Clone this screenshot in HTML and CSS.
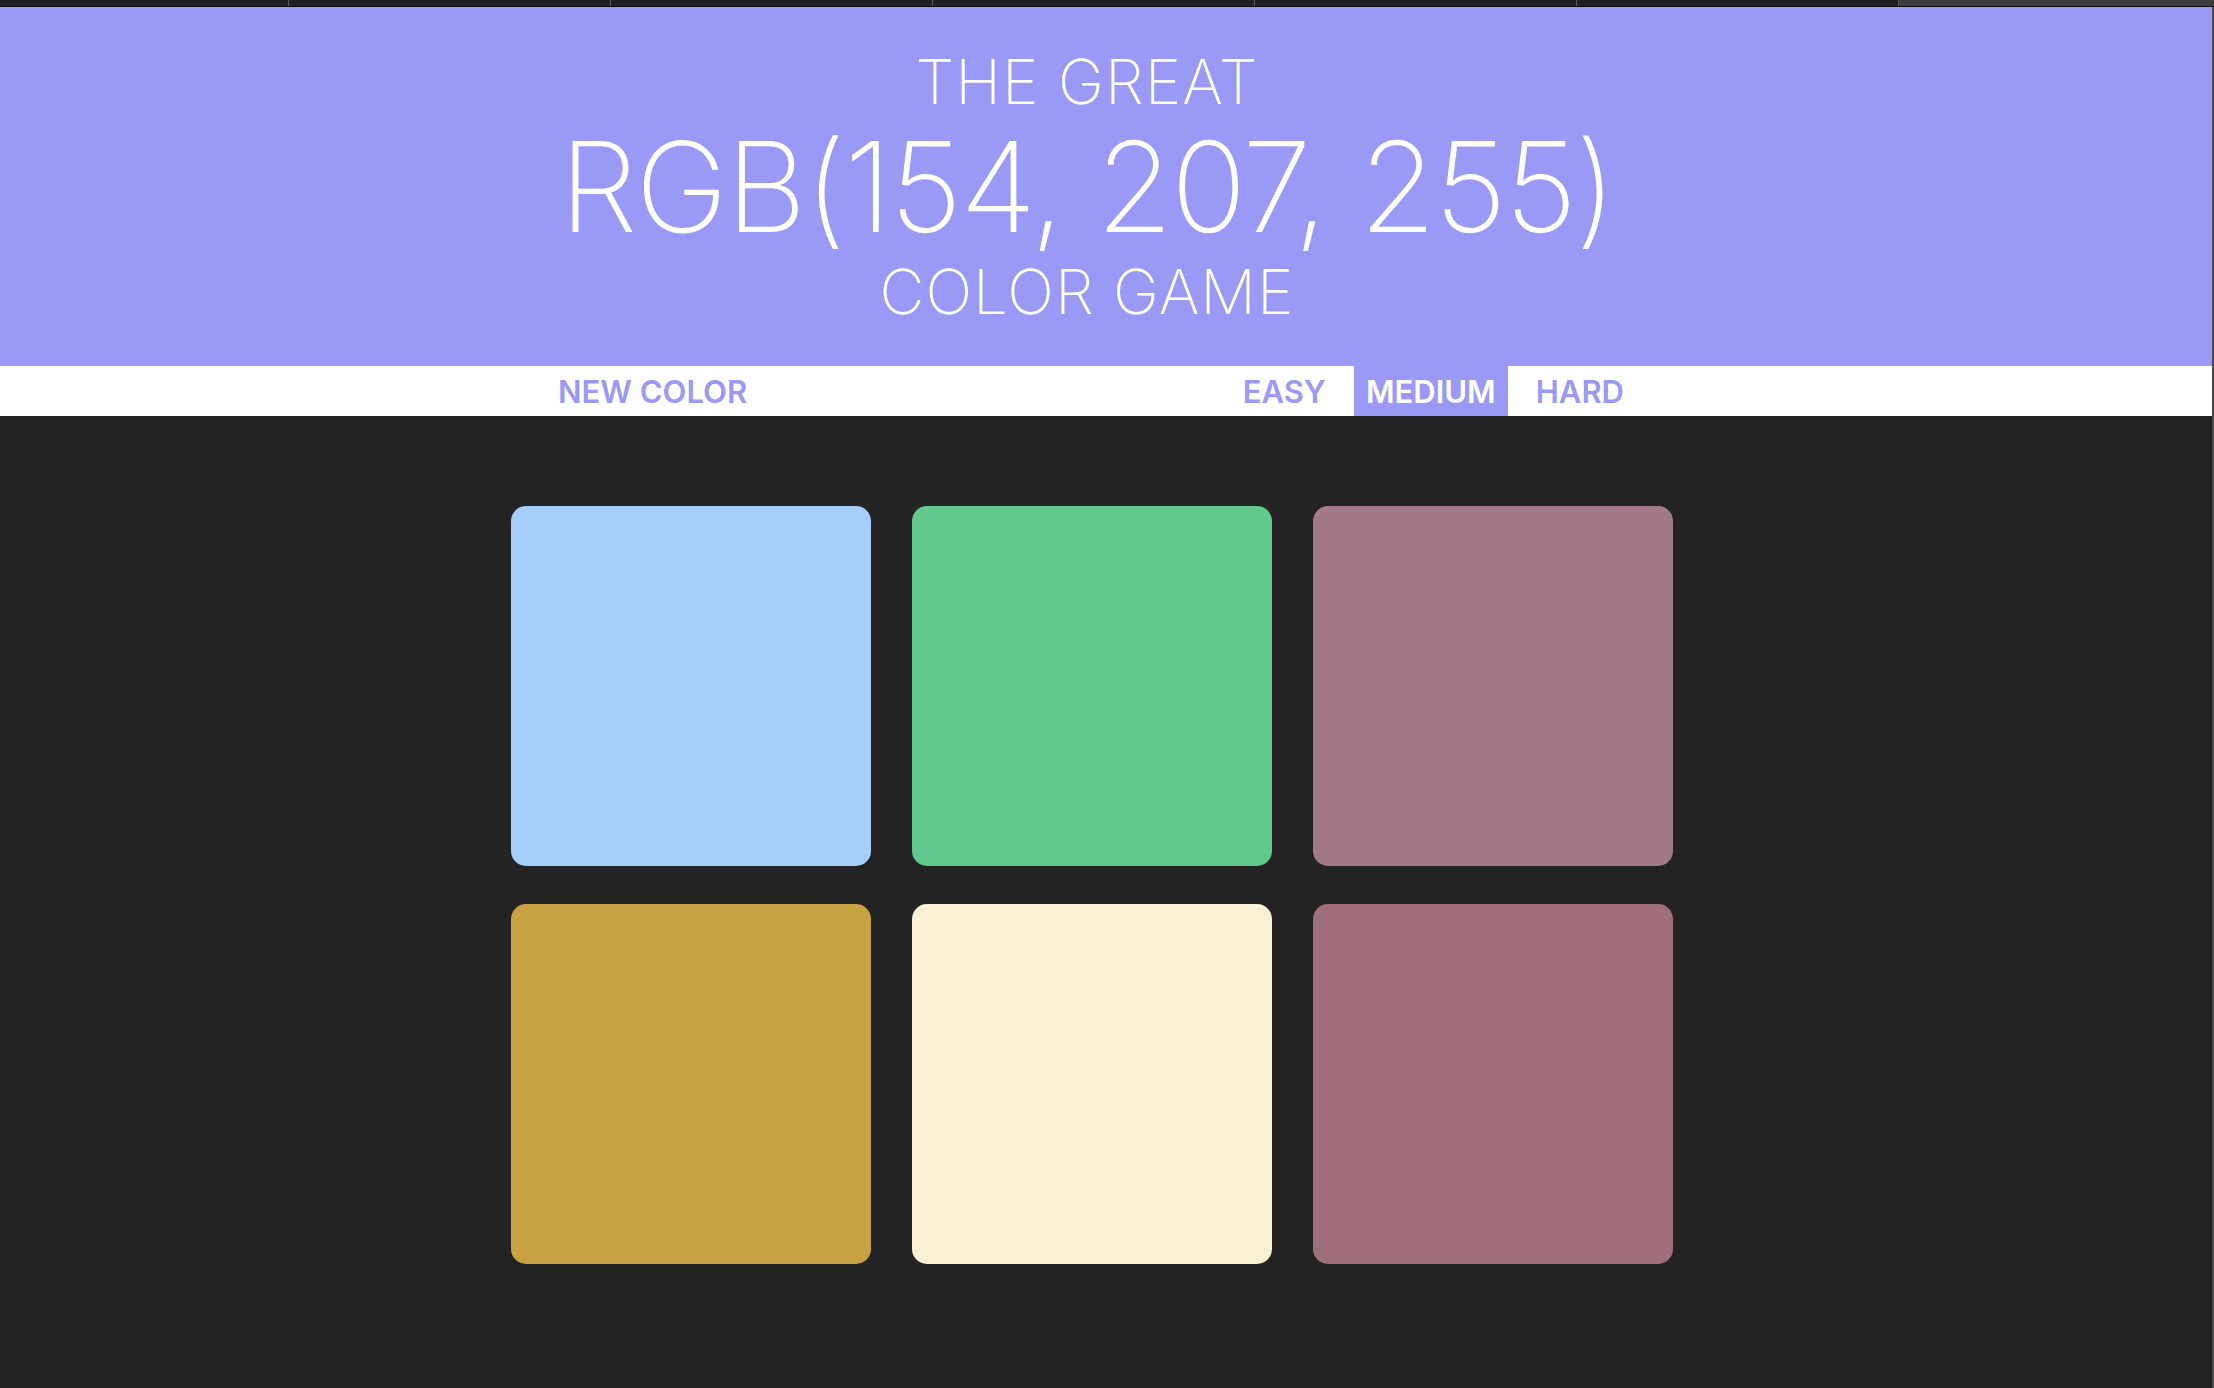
FILE: index.html
```html
<!DOCTYPE html>
<html lang="en">
<head>
<meta charset="utf-8">
<title>Color Game</title>
<link rel="stylesheet" href="styles.css">
</head>
<body>
<div class="tabs">
  <div class="tab"></div><div class="tab"></div><div class="tab"></div><div class="tab"></div><div class="tab"></div><div class="tab"></div><div class="tab tab-active"></div>
</div>
<div class="page">
  <header class="hero">
    <h1 class="title">
      <span class="title-small">THE GREAT</span>
      <span class="title-big">RGB(154, 207, 255)</span>
      <span class="title-small">COLOR GAME</span>
    </h1>
  </header>
  <nav class="stripe">
    <div class="stripe-inner">
      <button class="btn btn-reset">NEW COLOR</button>
      <span class="message"></span>
      <div class="modes">
        <button class="btn mode">EASY</button>
        <button class="btn mode selected">MEDIUM</button>
        <button class="btn mode">HARD</button>
      </div>
    </div>
  </nav>
  <main class="board">
    <div class="grid">
      <div class="square sq1"></div>
      <div class="square sq2"></div>
      <div class="square sq3"></div>
      <div class="square sq4"></div>
      <div class="square sq5"></div>
      <div class="square sq6"></div>
    </div>
  </main>
  <div class="scrollbar"></div>
</div>
</body>
</html>
```

FILE: styles.css
```css
html, body {
  margin: 0;
  padding: 0;
  height: 100%;
}
body {
  background: #232323;
  font-family: Inter, "Liberation Sans", sans-serif;
  display: flex;
  flex-direction: column;
  overflow: hidden;
}
.tabs {
  display: flex;
  height: 6px;
  background: #1f1f1f;
  border-bottom: 1px solid #0c0c0c;
  flex: none;
}
.tab {
  width: 322px;
  border-right: 1px solid #5a5a5a;
  box-sizing: border-box;
  background: #1f1f1f;
}
.tab:first-child { width: 289px; }
.tab-active {
  flex: 1;
  background: #3b3b3b;
  border-right: none;
}
.page {
  flex: 1;
  display: flex;
  flex-direction: column;
  position: relative;
}
.scrollbar {
  position: absolute;
  top: 0;
  right: 0;
  width: 2px;
  height: 100%;
  background: #4a4a4a;
}
.hero {
  background: #9a9af6;
  height: 359px;
  box-sizing: border-box;
  padding-right: 40px;
  display: flex;
  justify-content: center;
}
.title {
  margin: 0;
  color: #fff;
  font-weight: 200;
  text-align: center;
  display: flex;
  flex-direction: column;
  align-items: center;
  padding-top: 35px;
}
.title-small {
  font-size: 62px;
  line-height: 80px;
  letter-spacing: 1px;
}
.title-big {
  font-size: 125px;
  line-height: 130px;
  letter-spacing: -2px;
}
.stripe {
  background: #fff;
  height: 50px;
  display: flex;
  justify-content: center;
  padding-right: 20px;
}
.stripe-inner {
  width: 1078px;
  display: flex;
  align-items: stretch;
}
.btn {
  border: none;
  background: none;
  color: #9a9af6;
  font-family: Inter, "Liberation Sans", sans-serif;
  font-weight: 600;
  font-size: 31px;
  padding: 0 12px;
  margin: 0;
  height: 50px;
  letter-spacing: 0;
}
.btn-reset { padding-left: 0; }
.message { flex: 1; }
.modes {
  display: flex;
  gap: 16px;
}
.mode.selected {
  background: #9a9af6;
  color: #fff;
}
.board {
  flex: 1;
  display: flex;
  justify-content: center;
  padding-top: 90px;
  padding-right: 30px;
}
.grid {
  display: grid;
  grid-template-columns: repeat(3, 360px);
  grid-auto-rows: 360px;
  column-gap: 41px;
  row-gap: 38px;
  align-content: start;
}
.square { border-radius: 15px; }
.sq1 { background: #a5cffa; }
.sq2 { background: #61c98c; }
.sq3 { background: #a37888; }
.sq4 { background: #c8a242; }
.sq5 { background: #faf0d4; }
.sq6 { background: #a06e7a; }
```
